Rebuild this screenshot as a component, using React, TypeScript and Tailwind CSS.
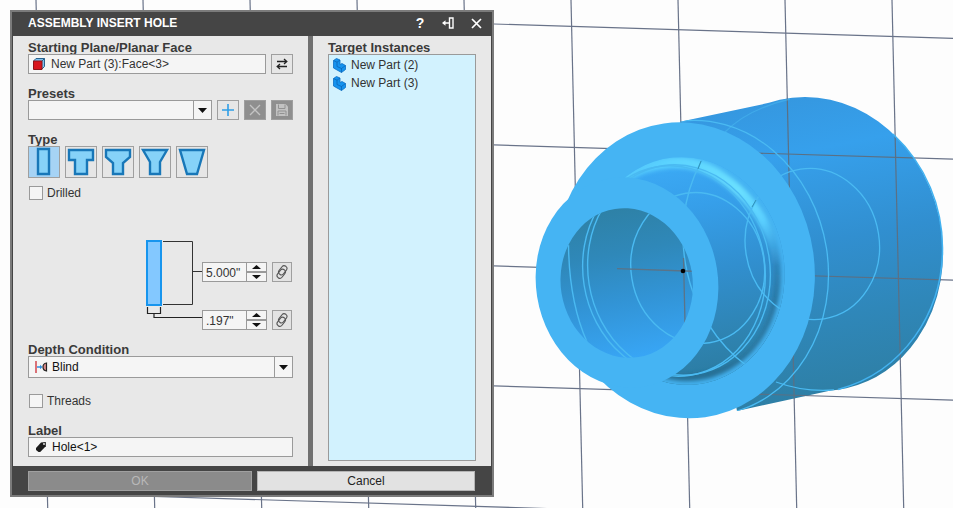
import { useState } from 'react';
import type { ReactNode } from 'react';

const verticals = [36, 143, 250, 357, 464, 571, 678, 785, 892];
const horizontals = [145, 266, 386, 507];

const holeTypes = [
  { name: "Simple", d: "M10 3H21V28H10Z" },
  { name: "Counterbore", d: "M4 4H28V14H22V28H10V14H4Z" },
  { name: "Counterdrill", d: "M4 4H28V11L21 17V28H11V17L4 11Z" },
  { name: "Countersink", d: "M4 4H28L21 16V28H11V16Z" },
  { name: "Tapered", d: "M4 4H28L21 28H11Z" }
];

function Grid({ color }: { color: string }) {
  return (
    <g stroke={color} strokeWidth="1.2" fill="none">
      {verticals.map((x) => (
        <line key={x} x1={x} y1="0" x2={x + 11.7} y2="508" />
      ))}
      <line x1="494" y1="24" x2="953" y2="38.3" />
      {horizontals.map((y) => (
        <line key={y} x1="12" y1={y - 15} x2="953" y2={y + 14.2} />
      ))}
    </g>
  );
}

// Edges that can be seen through the open faces of the part
function HiddenEdges() {
  return (
    <g fill="none" stroke="#4abaf2" strokeWidth="1.4">
      <ellipse cx="813" cy="244" rx="129" ry="148" transform="rotate(-13 813 244)" />
      <ellipse cx="812.3" cy="244" rx="67" ry="75.7" transform="rotate(-9 812.3 244)" />
      <ellipse cx="697.7" cy="268" rx="66.7" ry="75.7" transform="rotate(-9 697.7 268)" />
      <ellipse cx="679" cy="270" rx="91" ry="105.5" transform="rotate(-9 679 270)" />
      <ellipse cx="674" cy="271" rx="91" ry="105.5" transform="rotate(-9 674 271)" />
    </g>
  );
}

function Viewport() {
  return (
    <svg
      className="absolute inset-0 h-full w-full"
      viewBox="0 0 953 508"
      preserveAspectRatio="xMaxYMin slice"
      aria-hidden="true"
    >
      <defs>
        <linearGradient id="body" gradientUnits="userSpaceOnUse" x1="770" y1="96" x2="830" y2="396">
          <stop offset="0" stopColor="#3597df" />
          <stop offset="0.2" stopColor="#36a0ec" />
          <stop offset="0.5" stopColor="#318fd0" />
          <stop offset="0.75" stopColor="#2f87b9" />
          <stop offset="1" stopColor="#2e7fa5" />
        </linearGradient>
        <linearGradient id="tube" gradientUnits="userSpaceOnUse" x1="675" y1="165" x2="715" y2="380">
          <stop offset="0" stopColor="#3ba9f4" />
          <stop offset="0.2" stopColor="#369fea" />
          <stop offset="0.5" stopColor="#318fcf" />
          <stop offset="0.85" stopColor="#2e82ae" />
          <stop offset="1" stopColor="#2b7ba1" />
        </linearGradient>
        <linearGradient id="bore" gradientUnits="userSpaceOnUse" x1="612" y1="208" x2="641" y2="358">
          <stop offset="0" stopColor="#2e81a6" />
          <stop offset="0.3" stopColor="#2f88b9" />
          <stop offset="0.62" stopColor="#3294d6" />
          <stop offset="1" stopColor="#38a6f6" />
        </linearGradient>
        <linearGradient id="shine" gradientUnits="userSpaceOnUse" x1="618" y1="175" x2="782" y2="265">
          <stop offset="0" stopColor="#5bd3ff" stopOpacity="0.6" />
          <stop offset="0.2" stopColor="#5bd3ff" />
          <stop offset="0.6" stopColor="#6ae0ff" />
          <stop offset="0.8" stopColor="#5acfff" />
          <stop offset="1" stopColor="#46b4f2" stopOpacity="0" />
        </linearGradient>
        <linearGradient id="shade" gradientUnits="userSpaceOnUse" x1="760" y1="235" x2="750" y2="370">
          <stop offset="0" stopColor="#24688c" stopOpacity="0" />
          <stop offset="0.5" stopColor="#24688c" stopOpacity="0.6" />
          <stop offset="1" stopColor="#24688c" stopOpacity="0.7" />
        </linearGradient>
        <filter id="soft" filterUnits="userSpaceOnUse" x="540" y="110" width="290" height="320">
          <feGaussianBlur stdDeviation="2" />
        </filter>
        <clipPath id="bodyClip">
          <ellipse cx="813" cy="244" rx="129" ry="148" transform="rotate(-13 813 244)" />
          <path d="M680 121.7L780 100.5L840 388.5L737 411Z" />
        </clipPath>
        <clipPath id="stepClip">
          <ellipse cx="684.5" cy="271" rx="100" ry="114" transform="rotate(-6 684.5 271)" />
        </clipPath>
        <clipPath id="boreClip">
          <ellipse cx="626.7" cy="283" rx="66" ry="75" transform="rotate(-9 626.7 283)" />
        </clipPath>
      </defs>

      <Grid color="#697389" />

      <g clipPath="url(#bodyClip)">
        <rect x="640" y="80" width="313" height="350" fill="url(#body)" />
        <Grid color="#5b7084" />
        <g fill="none" stroke="#4abaf2" strokeWidth="1.3">
          <ellipse cx="812.3" cy="244" rx="67" ry="75.7" transform="rotate(-9 812.3 244)" />
          <ellipse cx="700" cy="268" rx="128" ry="148" transform="rotate(-9 700 268)" />
          <path d="M776 382C795 389 815 391.5 834 390" />
          <path d="M725 132C735 122 752 108 790 99" opacity="0.5" />
        </g>
      </g>
      <path d="M893 134C926 165 943 207 942.5 250C942 312 904 372 838 389.5" fill="none" stroke="#43b2f0" strokeWidth="1.5" />

      <ellipse cx="684.5" cy="270.3" rx="130" ry="148.3" fill="#45b4f3" transform="rotate(-8 684.5 270.3)" />

      <g clipPath="url(#stepClip)">
        <rect x="580" y="150" width="210" height="240" fill="url(#tube)" />
        <path d="M768 225C787 275 782 330 745 360C725 376 700 380 662 380" fill="none" stroke="url(#shade)" strokeWidth="10" filter="url(#soft)" />
        <ellipse cx="684.5" cy="271" rx="100" ry="114" fill="none" stroke="#45b4f3" strokeWidth="7" transform="rotate(-6 684.5 271)" filter="url(#soft)" />
        <path d="M620 180C650 160 690 154 722 177C750 196 770 222 779 262" fill="none" stroke="url(#shine)" strokeWidth="11" filter="url(#soft)" />
        <HiddenEdges />
        <path d="M701 161L698 169M756 200L752 207" stroke="#3193b8" strokeWidth="1" />
      </g>

      <ellipse cx="627" cy="282.5" rx="91" ry="105.5" fill="#45b4f3" transform="rotate(-9 627 282.5)" />

      <g clipPath="url(#boreClip)">
        <rect x="555" y="200" width="145" height="165" fill="url(#bore)" />
        <HiddenEdges />
        <path d="M568.5 245C569 285 575 315 587 342" fill="none" stroke="#4abaf2" strokeWidth="1.4" />
        <path d="M617 268.7L694 271.3M683.5 258L685 323" fill="none" stroke="#5b7387" strokeWidth="1.3" />
      </g>
      <circle cx="683" cy="271" r="2.3" fill="#000" />
    </svg>
  );
}

function FieldLabel({ htmlFor, children }: { htmlFor?: string; children: ReactNode }) {
  return (
    <label htmlFor={htmlFor} className="block text-[13px] leading-3 font-bold text-[#3a3a3a]">
      {children}
    </label>
  );
}

function DropArrow() {
  return (
    <span className="pointer-events-none absolute inset-y-0 right-0 flex w-[18px] items-center justify-center border-l border-[#9a9a9a]">
      <svg width="9" height="5" viewBox="0 0 9 5"><path d="M0 0H9L4.5 5Z" fill="#111" /></svg>
    </span>
  );
}

function SquareButton({ label, disabled, children }: { label: string; disabled?: boolean; children: ReactNode }) {
  return (
    <button
      type="button"
      aria-label={label}
      disabled={disabled}
      className="flex h-5 w-[22px] shrink-0 items-center justify-center border border-[#9f9f9f] bg-[#e6e6e6] disabled:bg-[#8f8f8f]"
    >
      {children}
    </button>
  );
}

function Stepper({ label, value, onChange, step }: { label: string; value: number; onChange: (v: number) => void; step: number }) {
  const text = value.toFixed(3).replace(/^0/, "") + '"';

  return (
    <div className="flex h-5">
      <input
        aria-label={label}
        value={text}
        onChange={(e) => onChange(parseFloat(e.target.value) || 0)}
        className="w-[45px] border border-[#9a9a9a] bg-[#f5f5f5] pt-0.5 pl-[3px] text-[12px] text-[#333] outline-none"
      />
      <div className="flex w-5 flex-col">
        <button type="button" aria-label={label + " up"} onClick={() => onChange(value + step)} className="flex flex-1 items-center justify-center border border-l-0 border-[#9a9a9a] bg-[#f5f5f5]">
          <svg width="9" height="4" viewBox="0 0 9 4"><path d="M0 4H9L4.5 0Z" fill="#111" /></svg>
        </button>
        <button type="button" aria-label={label + " down"} onClick={() => onChange(value - step)} className="flex flex-1 items-center justify-center border border-l-0 border-[#9a9a9a] bg-[#f5f5f5]">
          <svg width="9" height="4" viewBox="0 0 9 4"><path d="M0 0H9L4.5 4Z" fill="#111" /></svg>
        </button>
      </div>
      <button type="button" aria-label={label + " link"} className="ml-[5px] flex w-5 items-center justify-center border border-[#9f9f9f] bg-[#e3e3e3]">
        <svg width="14" height="16" viewBox="0 0 14 16" fill="none" stroke="#555" strokeWidth="1.100">
          <rect x="5" y="1.300" width="5.500" height="10" rx="2.700" transform="rotate(38 7.800 6.300)" />
          <rect x="3.500" y="4.700" width="5.500" height="10" rx="2.700" transform="rotate(38 6.200 9.700)" />
        </svg>
      </button>
    </div>
  );
}

function PartIcon() {
  return (
    <svg width="13" height="15" viewBox="0 0 13 15">
      <path d="M0.500 2.500L3.500 0.500L7 2V6.500L9 5.500L12.500 7.500V11.500L8.500 14.500L0.500 10Z" fill="#1593ee" stroke="#0b6fc4" strokeWidth="0.8" strokeLinejoin="round" />
      <path d="M0.500 2.500L4 4.200L7 2M4 4.200V8.500L8.500 10.500L12.500 7.500M8.500 10.500V14.500" fill="none" stroke="#0a60b0" strokeWidth="0.7" />
    </svg>
  );
}

export default function App() {
  const [holeType, setHoleType] = useState("Simple");
  const [depth, setDepth] = useState(5);
  const [diameter, setDiameter] = useState(0.197);
  const [label, setLabel] = useState("Hole<1>");

  return (
    <main className="relative min-h-screen overflow-hidden bg-[#fdfdfd] pt-2.5 pl-2.5 font-['Liberation_Sans',Arial,sans-serif] text-[12px] text-[#333]">
      <Viewport />

      <section aria-label="Assembly Insert Hole" className="relative w-[484px] border-2 border-[#7b7b7b] bg-[#454545]">
        <header className="flex h-6 items-center pr-2.5 pb-0.5 pl-4 text-white">
          <h1 className="flex-1 text-[12px] font-bold">ASSEMBLY INSERT HOLE</h1>
          <div className="flex items-center gap-4">
            <button type="button" aria-label="Help" className="flex w-3 justify-center text-[14px] leading-4 font-bold">?</button>
            <button type="button" aria-label="Dock" className="flex w-3 justify-center">
              <svg width="12" height="12" viewBox="0 0 12 12" fill="none" stroke="#fff">
                <path d="M7.500 1H11V11H7.500Z" strokeWidth="1.400" />
                <path d="M1.500 6H7" strokeWidth="1.500" />
                <path d="M0 6L3.500 3.300V8.700Z" fill="#fff" stroke="none" />
              </svg>
            </button>
            <button type="button" aria-label="Close" className="flex w-3 justify-center">
              <svg width="11" height="11" viewBox="0 0 11 11" stroke="#fff" strokeWidth="1.700"><path d="M1 1L10 10M10 1L1 10" /></svg>
            </button>
          </div>
        </header>

        <div className="mx-px flex bg-[#e8e8e8]">
          <div className="w-[295px] px-[15px] pt-1.5 pb-[9px]">
            <FieldLabel htmlFor="plane">Starting Plane/Planar Face</FieldLabel>
            <div className="flex gap-[5px]">
              <div className="flex h-5 min-w-0 flex-1 items-center gap-1.5 border border-[#9a9a9a] bg-[#f5f5f5] pl-1">
                <svg width="12" height="12" viewBox="0 0 12 12" className="shrink-0" strokeLinejoin="round">
                  <path d="M0.500 3L3 0.500H11.500V8.500L9 11" fill="#7cc0ee" stroke="#28608c" />
                  <path d="M9 3L11.500 0.500" stroke="#28608c" />
                  <path d="M0.500 3H9V11.500H0.500Z" fill="#d8141c" stroke="#8c1418" />
                </svg>
                <input id="plane" readOnly value="New Part (3):Face<3>" className="min-w-0 flex-1 outline-none" />
              </div>
              <SquareButton label="Flip">
                <svg width="12" height="12" viewBox="0 0 12 12" fill="none" stroke="#222" strokeWidth="1.300">
                  <path d="M1 3.500H10.500M8 1L10.800 3.500L8 6M11 8.500H1.500M4 6L1.200 8.500L4 11" />
                </svg>
              </SquareButton>
            </div>

            <div className="pt-3.5">
              <FieldLabel htmlFor="presets">Presets</FieldLabel>
            </div>
            <div className="flex gap-[5px]">
              <div className="relative flex h-5 flex-1 border border-[#9a9a9a] bg-[#f5f5f5]">
                <select id="presets" className="w-full appearance-none pl-1 outline-none"><option></option></select>
                <DropArrow />
              </div>
              <SquareButton label="Add preset">
                <svg width="12" height="12" viewBox="0 0 12 12" stroke="#2f9ee6" strokeWidth="1.600"><path d="M6 0V12M0 6H12" /></svg>
              </SquareButton>
              <SquareButton label="Delete preset" disabled>
                <svg width="12" height="12" viewBox="0 0 12 12" stroke="#c4c4c4" strokeWidth="1.300"><path d="M1 1L11 11M11 1L1 11" /></svg>
              </SquareButton>
              <SquareButton label="Save preset" disabled>
                <svg width="14" height="14" viewBox="0 0 14 14">
                  <path d="M1 1H10.500L13 3.500V13H1Z" fill="#c2c2c2" />
                  <path d="M3.500 1.500V5.500H10V1.500M3 12.500V8H11V12.500M4.500 10.500H9.500" fill="none" stroke="#929292" />
                </svg>
              </SquareButton>
            </div>

            <fieldset className="pt-3.5">
              <legend className="float-left w-full text-[13px] leading-3 font-bold text-[#3a3a3a]">Type</legend>
              <div className="clear-both flex gap-[5px]">
                {holeTypes.map((t) => (
                  <button
                    key={t.name}
                    type="button"
                    aria-label={t.name}
                    aria-pressed={holeType === t.name}
                    onClick={() => setHoleType(t.name)}
                    className="size-8 border border-[#9f9f9f] bg-[#e6e6e6] aria-pressed:bg-[#a6d3f5]"
                  >
                    <svg width="30" height="30" viewBox="1 1 30 30"><path d={t.d} fill="#86d2f8" stroke="#1877b8" strokeWidth="2.400" /></svg>
                  </button>
                ))}
              </div>
            </fieldset>

            <label className="mt-2 ml-px flex h-3.5 w-fit items-center gap-1">
              <input type="checkbox" className="size-3.5 appearance-none border border-[#9a9a9a] bg-[#f5f5f5] checked:bg-[#2f9ee6]" />
              Drilled
            </label>

            <div className="mt-10 flex">
              <svg width="174" height="90" viewBox="0 0 174 90" fill="none" className="shrink-0">
                <rect x="119" y="1" width="14" height="64" fill="#83c8ff" stroke="#1795ee" strokeWidth="2" />
                <path d="M135 1.500H164.500V64.500H135M164.500 31.500H174" stroke="#333" />
                <path d="M119.500 67V73.500H132.500V67M126 73.500V77.500H174" stroke="#222" strokeWidth="1.200" />
              </svg>
              <div className="flex flex-col gap-7 pt-[22px]">
                <Stepper label="Depth" value={depth} onChange={setDepth} step={0.125} />
                <Stepper label="Diameter" value={diameter} onChange={setDiameter} step={0.01} />
              </div>
            </div>

            <div className="pt-3.5">
              <FieldLabel htmlFor="condition">Depth Condition</FieldLabel>
            </div>
            <div className="relative flex h-[22px] items-center border border-[#9a9a9a] bg-[#f5f5f5] text-[#111]">
              <svg width="13" height="12" viewBox="0 0 13 12" className="absolute left-1.5">
                <path d="M1 0V12" stroke="#d0444c" strokeWidth="1.500" />
                <path d="M2 6H6" stroke="#2f8ee0" strokeWidth="1.500" />
                <path d="M5 3.800L7.500 6L5 8.200Z" fill="#2f8ee0" />
                <path d="M11.500 2V10Q8 9.500 8 6Q8 2.500 11.500 2Z" fill="#d98a8a" stroke="#222" strokeWidth="1.200" />
              </svg>
              <select id="condition" className="h-full w-full appearance-none pl-[23px] outline-none">
                <option>Blind</option>
                <option>Through All</option>
              </select>
              <DropArrow />
            </div>

            <label className="mt-4 ml-px flex h-3.5 w-fit items-center gap-1">
              <input type="checkbox" className="size-3.5 appearance-none border border-[#9a9a9a] bg-[#f5f5f5] checked:bg-[#2f9ee6]" />
              Threads
            </label>

            <div className="pt-[17px]">
              <FieldLabel htmlFor="label">Label</FieldLabel>
            </div>
            <div className="flex h-5 items-center gap-1.5 border border-[#9a9a9a] bg-[#f5f5f5] pl-[7px]">
              <svg width="10" height="10" viewBox="0 0 10 10" className="shrink-0">
                <path d="M0 6L5 0.500L9.800 0V4.200L4.200 10H2.500L0 8Z" fill="#1c1c1c" />
                <circle cx="8" cy="2" r="0.900" fill="#f5f5f5" />
              </svg>
              <input id="label" value={label} onChange={(e) => setLabel(e.target.value)} className="min-w-0 flex-1 text-[#111] outline-none" />
            </div>
          </div>

          <div className="w-[5px] bg-[#707070]"></div>

          <div className="flex flex-1 flex-col px-[15px] pt-1.5 pb-[5px]">
            <h2 className="text-[13px] leading-3 font-bold text-[#3a3a3a]">Target Instances</h2>
            <ul className="flex-1 border border-[#9a9a9a] bg-[#d2f2fe] pt-px pl-1">
              <li className="flex h-[18px] items-center gap-[5px]"><PartIcon />New Part (2)</li>
              <li className="flex h-[18px] items-center gap-[5px]"><PartIcon />New Part (3)</li>
            </ul>
          </div>
        </div>

        <footer className="flex gap-[5px] pt-[5px] pr-[17px] pb-1 pl-4">
          <button type="button" disabled className="h-5 w-56 border border-[#a0a0a0] bg-[#8b8b8b] text-[#b8b8b8]">OK</button>
          <button type="button" className="h-5 flex-1 border border-[#b5b5b5] bg-[#e2e2e2] text-[#222]">Cancel</button>
        </footer>
      </section>
    </main>
  );
}
